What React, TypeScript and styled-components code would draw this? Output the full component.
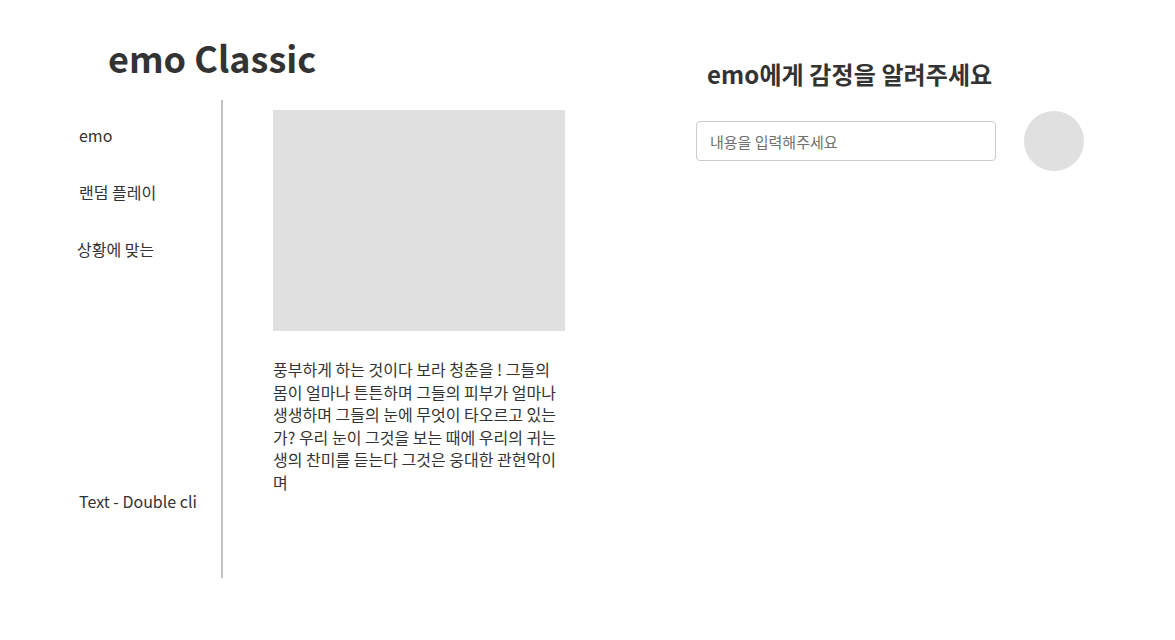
import React from "react";
import styled, { createGlobalStyle } from "styled-components";

const GlobalStyle = createGlobalStyle`
  html, body {
    margin: 0;
    padding: 0;
    background: #ffffff;
  }
  body {
    font-family: "Noto Sans CJK KR", "Noto Sans", sans-serif;
    color: #333333;
  }
  * { box-sizing: border-box; }
`;

const Page = styled.div`
  display: flex;
  align-items: flex-start;
  width: 1175px;
  height: 640px;
  overflow: hidden;
`;

const LeftColumn = styled.div`
  display: flex;
  flex-direction: column;
  width: 600px;
`;

const Header = styled.header`
  height: 100px;
  padding: 37px 0 0 108px;
`;

const Title = styled.h1`
  margin: 0;
  font-size: 36px;
  line-height: 40px;
  font-weight: 700;
  color: #333333;
`;

const Body = styled.div`
  display: flex;
  align-items: flex-start;
`;

const Sidebar = styled.nav`
  display: flex;
  flex-direction: column;
  align-items: flex-start;
  width: 223px;
  height: 478px;
  padding: 23.5px 0 0 79px;
  border-right: 2px solid #c2c2c2;
  overflow: hidden;
`;

const NavItem = styled.a<{ $gap?: number; $shift?: number }>`
  display: block;
  font-size: 16px;
  line-height: 22.5px;
  color: #333333;
  text-decoration: none;
  white-space: nowrap;
  margin-top: ${(p) => p.$gap ?? 0}px;
  margin-left: ${(p) => p.$shift ?? 0}px;
`;

const Content = styled.section`
  display: flex;
  flex-direction: column;
  width: 292px;
  margin: 10px 0 0 50px;
`;

const ImageBox = styled.div`
  width: 292px;
  height: 221px;
  background: #e0e0e0;
`;

const Paragraph = styled.p`
  margin: 27px 0 0;
  font-size: 16px;
  line-height: 22.5px;
  color: #333333;
`;

const RightColumn = styled.div`
  display: flex;
  flex-direction: column;
  margin-left: 96px;
  padding-top: 58px;
`;

const Heading = styled.h2`
  margin: 0 0 21px;
  padding-left: 11px;
  font-size: 24px;
  line-height: 32px;
  font-weight: 700;
  letter-spacing: 0.1px;
  color: #333333;
`;

const InputRow = styled.div`
  display: flex;
  align-items: center;
  gap: 28px;
`;

const TextInput = styled.input`
  width: 300px;
  height: 40px;
  padding: 0 13px;
  border: 1px solid #cccccc;
  border-radius: 4px;
  font-family: "Noto Sans CJK KR", "Noto Sans", sans-serif;
  font-size: 15px;
  color: #333333;
  outline: none;
  &::placeholder {
    color: #707070;
  }
`;

const Avatar = styled.div`
  width: 60px;
  height: 60px;
  border-radius: 50%;
  background: #e0e0e0;
`;

export default function App() {
  return (
    <>
      <GlobalStyle />
      <Page>
        <LeftColumn>
          <Header>
            <Title>emo Classic</Title>
          </Header>
          <Body>
            <Sidebar>
              <NavItem href="#">emo</NavItem>
              <NavItem href="#" $gap={34.5}>랜덤 플레이</NavItem>
              <NavItem href="#" $gap={34.5} $shift={-2}>상황에 맞는</NavItem>
              <NavItem href="#" $gap={229.8}>Text - Double cli</NavItem>
            </Sidebar>
            <Content>
              <ImageBox />
              <Paragraph>
                풍부하게 하는 것이다 보라 청춘을 ! 그들의 몸이 얼마나 튼튼하며 그들의 피부가 얼마나 생생하며 그들의 눈에 무엇이 타오르고 있는가? 우리 눈이 그것을 보는 때에 우리의 귀는 생의 찬미를 듣는다 그것은 웅대한 관현악이며
              </Paragraph>
            </Content>
          </Body>
        </LeftColumn>
        <RightColumn>
          <Heading>emo에게 감정을 알려주세요</Heading>
          <InputRow>
            <TextInput placeholder="내용을 입력해주세요" />
            <Avatar />
          </InputRow>
        </RightColumn>
      </Page>
    </>
  );
}
